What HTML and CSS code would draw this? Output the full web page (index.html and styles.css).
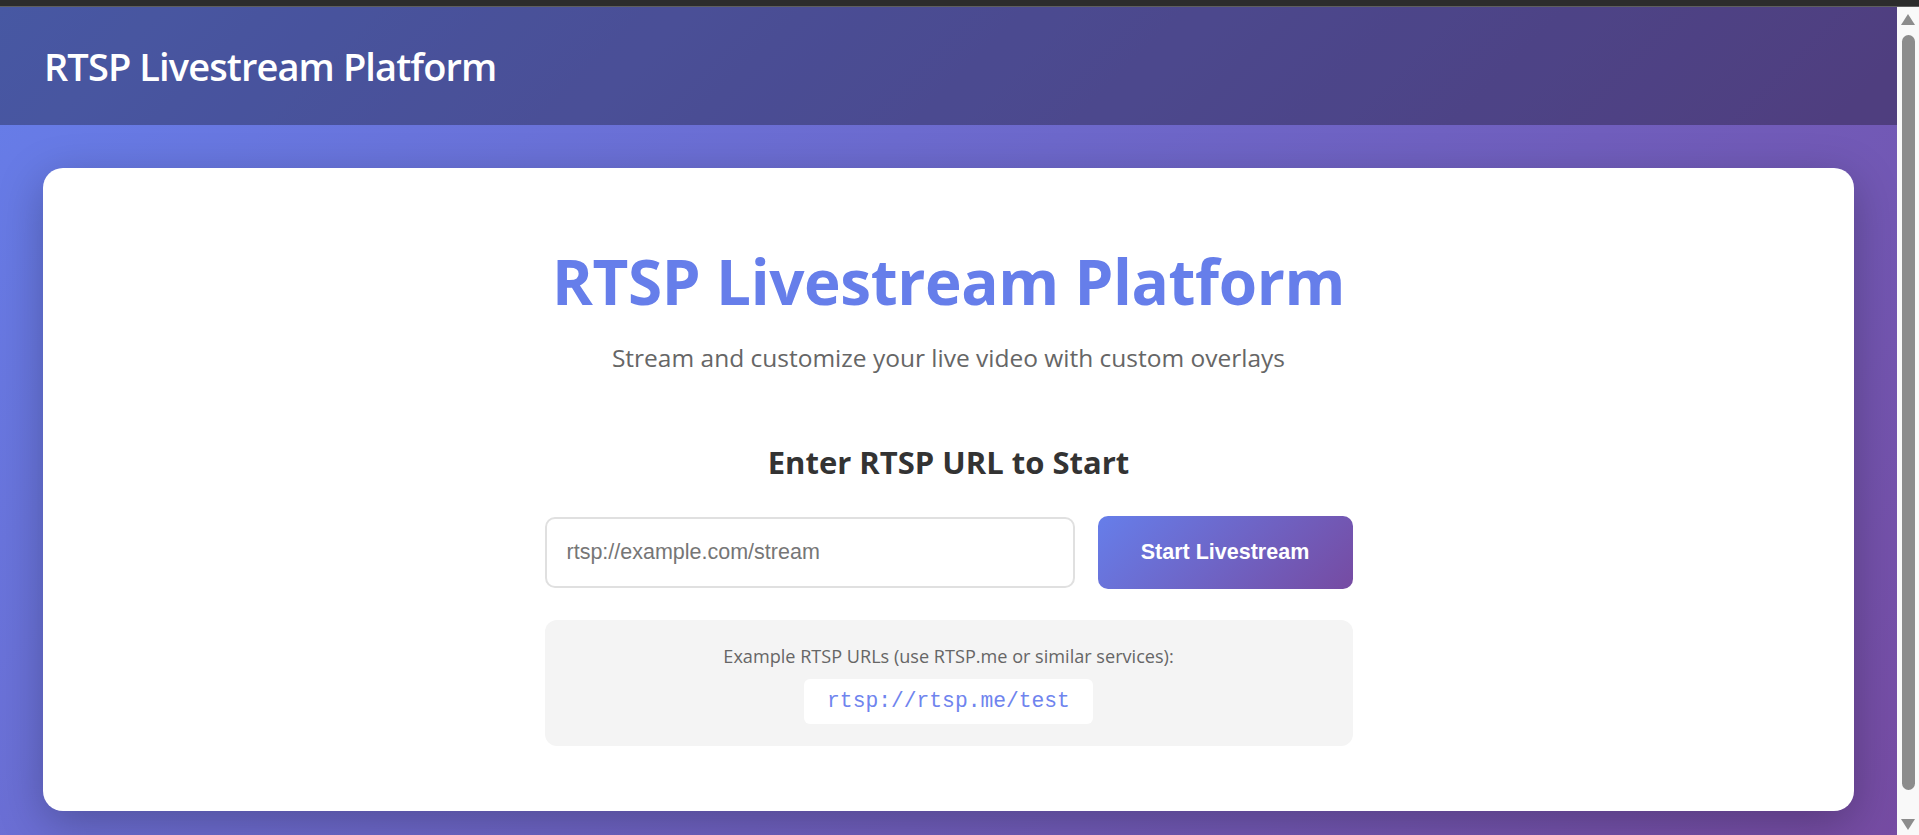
FILE: index.html
```html
<!DOCTYPE html>
<html lang="en">
<head>
<meta charset="utf-8">
<title>RTSP Livestream Platform</title>
<link rel="stylesheet" href="styles.css">
</head>
<body>
<div class="window-bar"></div>
<div class="frame">
  <div class="viewport">
    <div class="page">
      <header class="topbar">
        <h1 class="brand">RTSP Livestream Platform</h1>
      </header>
      <main class="main">
        <section class="card">
          <div class="hero">
            <h2 class="hero-title">RTSP Livestream Platform</h2>
            <p class="hero-sub">Stream and customize your live video with custom overlays</p>
          </div>
          <div class="start">
            <h3 class="start-title">Enter RTSP URL to Start</h3>
            <form class="url-form">
              <input class="url-input" type="text" placeholder="rtsp://example.com/stream">
              <button class="start-btn" type="button">Start Livestream</button>
            </form>
            <div class="examples">
              <p class="examples-text">Example RTSP URLs (use RTSP.me or similar services):</p>
              <code class="example-url">rtsp://rtsp.me/test</code>
            </div>
          </div>
        </section>
      </main>
    </div>
  </div>
  <div class="scrollbar" aria-hidden="true">
    <div class="sb-arrow"><span class="sb-tri sb-tri-up"></span></div>
    <div class="sb-track"><div class="sb-thumb"></div></div>
    <div class="sb-arrow"><span class="sb-tri sb-tri-down"></span></div>
  </div>
</div>
</body>
</html>
```

FILE: styles.css
```css
* { box-sizing: border-box; }

html, body {
  margin: 0;
  padding: 0;
  height: 100%;
  overflow: hidden;
}

body {
  font-family: "Open Sans", "Noto Sans", sans-serif;
  background: #2c2c2c;
}

.window-bar {
  height: 7px;
  background: #2c2c2c;
  border-bottom: 1px solid #5e5e5e;
}

.frame {
  height: 828px;
  display: flex;
}

.viewport {
  flex: 1;
  min-width: 0;
  overflow: hidden;
}

/* scrollbar drawn as in the screenshot */
.scrollbar {
  width: 22px;
  flex: none;
  background: #f9f9f9;
  display: flex;
  flex-direction: column;
}

.sb-arrow {
  height: 22px;
  flex: none;
  display: flex;
  align-items: center;
  justify-content: center;
}

.sb-tri {
  width: 0;
  height: 0;
  border-left: 7px solid transparent;
  border-right: 7px solid transparent;
}

.sb-tri-up {
  border-bottom: 11px solid #8c8c8c;
  margin-top: 2px;
}

.sb-tri-down {
  border-top: 11px solid #8c8c8c;
}

.sb-track {
  flex: 1;
  padding: 6px 4px 0 5px;
}

.sb-thumb {
  height: 755px;
  background: #8c8c8c;
  border-radius: 7px;
}

.page {
  background: linear-gradient(135deg, #667eea 0%, #764ba2 100%);
  min-height: 860px;
}

.topbar {
  height: 118px;
  display: flex;
  align-items: center;
  padding-left: 44px;
  background: rgba(0, 0, 0, 0.3);
}

.brand {
  margin: 0;
  color: #ffffff;
  font-size: 38px;
  font-weight: 600;
  letter-spacing: -0.9px;
  line-height: 50px;
}

.main {
  padding: 43px 43px 55px;
}

.card {
  background: #ffffff;
  border-radius: 20px;
  box-shadow: 0 12px 45px rgba(0, 0, 0, 0.25);
  padding: 73px 20px 65px;
  display: flex;
  flex-direction: column;
  align-items: center;
}

.hero {
  text-align: center;
}

.hero-title {
  margin: 0;
  color: #667eea;
  font-size: 62px;
  font-weight: 700;
  letter-spacing: -0.4px;
  line-height: 80px;
}

.hero-sub {
  margin: 22px 0 0;
  color: #666666;
  font-size: 24.5px;
  line-height: 30px;
}

.start {
  width: 808px;
  display: flex;
  flex-direction: column;
  align-items: center;
}

.start-title {
  margin: 69px 0 0;
  color: #333333;
  font-size: 31px;
  font-weight: 700;
  line-height: 40px;
}

.url-form {
  margin: 34px 0 0;
  width: 100%;
  display: flex;
  align-items: center;
  gap: 23px;
}

.url-input {
  width: 530px;
  height: 71px;
  border: 2px solid #e0e0e0;
  border-radius: 10px;
  padding: 0 20px;
  font-family: "Liberation Sans", Arial, sans-serif;
  font-size: 21.5px;
  color: #333333;
  outline: none;
}

.url-input::placeholder {
  color: #767676;
}

.start-btn {
  flex: 1;
  height: 73px;
  border: none;
  border-radius: 10px;
  background: linear-gradient(135deg, #667eea 0%, #764ba2 100%);
  color: #ffffff;
  font-family: "Liberation Sans", Arial, sans-serif;
  font-size: 21.5px;
  font-weight: 700;
  cursor: pointer;
}

.examples {
  margin-top: 31px;
  width: 100%;
  background: #f4f4f4;
  border-radius: 12px;
  padding: 24px 20px 22px;
  display: flex;
  flex-direction: column;
  align-items: center;
}

.examples-text {
  margin: 0;
  color: #666666;
  font-size: 18.1px;
  line-height: 24px;
}

.example-url {
  margin-top: 11px;
  height: 45px;
  padding: 0 23px;
  background: #ffffff;
  border-radius: 6px;
  color: #6f84ee;
  font-family: "Liberation Mono", "Courier New", monospace;
  font-size: 21.3px;
  line-height: 45px;
}
```
